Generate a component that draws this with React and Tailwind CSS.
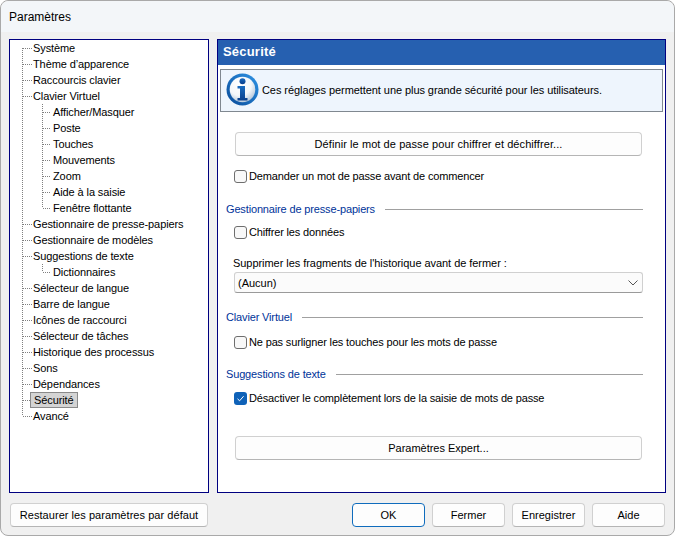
const font = { fontFamily: '"Liberation Sans", sans-serif' };

const TREE = [
  ["Système", 0],
  ["Thème d’apparence", 0],
  ["Raccourcis clavier", 0],
  ["Clavier Virtuel", 0],
  ["Afficher/Masquer", 1],
  ["Poste", 1],
  ["Touches", 1],
  ["Mouvements", 1],
  ["Zoom", 1],
  ["Aide à la saisie", 1],
  ["Fenêtre flottante", 2],
  ["Gestionnaire de presse-papiers", 0],
  ["Gestionnaire de modèles", 0],
  ["Suggestions de texte", 0],
  ["Dictionnaires", 2],
  ["Sélecteur de langue", 0],
  ["Barre de langue", 0],
  ["Icônes de raccourci", 0],
  ["Sélecteur de tâches", 0],
  ["Historique des processus", 0],
  ["Sons", 0],
  ["Dépendances", 0],
  ["Sécurité", 0],
  ["Avancé", 3],
];

function TreeGuide({ level, index }) {
  const c = "#808080";
  const dash = "1 1";
  const child = level === 1 || level === 2;
  const last = level === 3;
  return (
    <svg width="40" height="16" className="shrink-0">
      {/* main trunk */}
      <line x1="12.5" y1={index === 0 ? 8 : 0} x2="12.5" y2={last ? 8 : 16} stroke={c} strokeDasharray={dash} />
      {child ? (
        <>
          <line x1="32.5" y1="0" x2="32.5" y2={level === 2 ? 8 : 16} stroke={c} strokeDasharray={dash} />
          <line x1="33" y1="8.5" x2="40" y2="8.5" stroke={c} strokeDasharray={dash} />
        </>
      ) : (
        <line x1="13" y1="8.5" x2="22" y2="8.5" stroke={c} strokeDasharray={dash} />
      )}
    </svg>
  );
}

function Tree() {
  return (
    <div className="w-[200px] border border-[#000080] bg-white text-[11px] tracking-[-0.1px] text-black">
      {TREE.map(([label, level], i) => {
        const child = level === 1 || level === 2;
        const selected = label === "Sécurité";
        return (
          <div key={label} className="flex h-4 items-center">
            <TreeGuide level={level} index={i} />
            {selected ? (
              <span className="-ml-[20px] h-4 border border-[#8a8a8a] bg-[#d4d4d4] px-[3px] leading-[14px]">{label}</span>
            ) : (
              <span className={(child ? "ml-[2px] " : "-ml-[18px] ") + "px-[1px] whitespace-nowrap"}>{label}</span>
            )}
          </div>
        );
      })}
    </div>
  );
}

function Button({ children, primary, className = "" }) {
  const edge = primary ? "border-[#0f6cbd]" : "border-[#d0d0d0] border-b-[#b5b5b5]";
  return (
    <button
      className={
        "flex h-[24px] items-center justify-center rounded-[4px] border bg-[#fdfdfd] text-[11px] text-black " +
        edge +
        " " +
        className
      }
    >
      {children}
    </button>
  );
}

function Check({ label, checked }) {
  return (
    <div className="flex h-[16px] items-center">
      {checked ? (
        <span className="flex h-[13px] w-[13px] items-center justify-center rounded-[3px] bg-[#0f62b8]">
          <svg width="9" height="9" viewBox="0 0 9 9" fill="none">
            <path d="M1.5 4.8 3.6 6.8 7.6 2.2" stroke="#fff" strokeWidth="1" />
          </svg>
        </span>
      ) : (
        <span className="h-[13px] w-[13px] rounded-[3px] border border-[#6e6e6e] bg-[#f8f8f8]" />
      )}
      <span className="ml-[2px] text-[11px] tracking-[-0.15px] text-black">{label}</span>
    </div>
  );
}

function Section({ title, className = "" }) {
  return (
    <div className={"flex h-[16px] items-center text-[11px] text-[#003399] " + className}>
      <span className="tracking-[-0.15px]">{title}</span>
      <span className="ml-[10px] h-px flex-1 bg-[#a0a0a0]" />
    </div>
  );
}

function InfoIcon() {
  return (
    <svg width="33" height="33" viewBox="0 0 33 33" className="mb-[2px] ml-[1px] shrink-0">
      <defs>
        <radialGradient id="infoFace" cx="0.4" cy="0.3" r="0.8">
          <stop offset="0" stopColor="#ffffff" />
          <stop offset="0.55" stopColor="#f4f7fa" />
          <stop offset="1" stopColor="#a3bad2" />
        </radialGradient>
        <linearGradient id="infoRing" x1="1" y1="0" x2="0" y2="1">
          <stop offset="0" stopColor="#2f94e6" />
          <stop offset="1" stopColor="#084a98" />
        </linearGradient>
        <linearGradient id="infoMark" x1="0" y1="0" x2="0" y2="1">
          <stop offset="0" stopColor="#1a6cc0" />
          <stop offset="1" stopColor="#0a3f8c" />
        </linearGradient>
      </defs>
      <circle cx="16.5" cy="16.5" r="16" fill="url(#infoRing)" />
      <circle cx="16.500" cy="16.500" r="12.800" fill="url(#infoFace)" />
      <circle cx="16.500" cy="8.200" r="3" fill="url(#infoMark)" />
      <path d="M11.500 13h7.500v12h2.500v2.500h-10v-2.500h2.500v-9.500h-2.500z" fill="url(#infoMark)" />
    </svg>
  );
}

function Security() {
  return (
    <div className="flex w-[449px] flex-col border border-[#000080] bg-white text-[11px]">
      <div className="flex h-[25px] items-center bg-[#2660b0] px-[5px] pb-[1px] text-[13px] font-bold tracking-[0.2px] text-white">Sécurité</div>
      <div className="mx-[2px] mt-[4px] flex h-[43px] items-center border border-[#808890] bg-[#eef5fd] pl-[4px]">
        <InfoIcon />
        <span className="ml-[3px] tracking-[-0.07px] text-black">Ces réglages permettent une plus grande sécurité pour les utilisateurs.</span>
      </div>
      <div className="flex flex-1 flex-col pl-[8px] pr-[22px]">
        <Button className="ml-[9px] mt-[20px] w-[407px] tracking-[0.08px]">Définir le mot de passe pour chiffrer et déchiffrer...</Button>
        <div className="ml-[8px] mt-[12px]">
          <Check label="Demander un mot de passe avant de commencer" />
        </div>
        <Section title="Gestionnaire de presse-papiers" className="mt-[17px]" />
        <div className="ml-[8px] mt-[7px]">
          <Check label="Chiffrer les données" />
        </div>
        <div className="ml-[7px] mt-[15px] h-[16px] leading-[16px] tracking-[-0.05px] text-black">
          Supprimer les fragments de l'historique avant de fermer :
        </div>
        <div className="ml-[8px] mt-[1px] flex h-[21px] items-center justify-between rounded-[3px] border border-[#d0d0d0] border-b-[#9a9a9a] bg-[#fbfbfb] pl-[3px] pr-[3px] text-black">
          <span className="pt-[1px]">(Aucun)</span>
          <svg width="12" height="8" viewBox="0 0 12 8" fill="none">
            <path d="M1.500 1.500 6 6 10.500 1.500" stroke="#555" strokeWidth="1" />
          </svg>
        </div>
        <Section title="Clavier Virtuel" className="mt-[16px]" />
        <div className="ml-[8px] mt-[9px]">
          <Check label="Ne pas surligner les touches pour les mots de passe" />
        </div>
        <Section title="Suggestions de texte" className="mt-[16px]" />
        <div className="ml-[8px] mt-[8px]">
          <Check checked label="Désactiver le complètement lors de la saisie de mots de passe" />
        </div>
        <Button className="ml-[9px] mt-[30px] w-[407px] -tracking-[0.02px]">Paramètres Expert...</Button>
      </div>
    </div>
  );
}

export default function App() {
  return (
    <div style={font} className="h-[536px] w-[675px] overflow-hidden bg-white">
      <div className="flex h-[536px] w-[675px] flex-col rounded-[8px] border border-[#a9a9a9] bg-[#f0f0f0]">
        <div className="flex h-[31px] items-center rounded-t-[8px] bg-[#f3f6f9] pl-[8px] text-[12px] text-black">Paramètres</div>
        <div className="flex flex-1 flex-col px-[8px] pt-[7px]">
          <div className="flex h-[454px] gap-[8px]">
            <Tree />
            <Security />
          </div>
          <div className="mt-[10px] flex">
            <Button className="ml-[1px] w-[198px] tracking-[0.05px]">Restaurer les paramètres par défaut</Button>
            <Button primary className="ml-[144px] w-[73px]">OK</Button>
            <Button className="ml-[7px] w-[73px]">Fermer</Button>
            <Button className="ml-[7px] w-[73px]">Enregistrer</Button>
            <Button className="ml-[7px] w-[73px]">Aide</Button>
          </div>
        </div>
      </div>
    </div>
  );
}
